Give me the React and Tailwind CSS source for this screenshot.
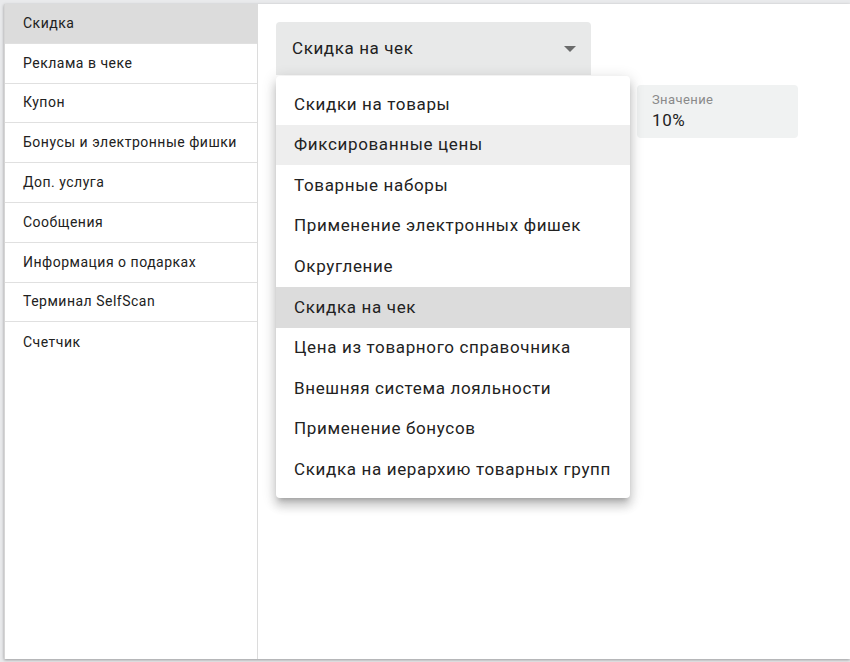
import React from "react";

const side = [
  "Скидка",
  "Реклама в чеке",
  "Купон",
  "Бонусы и электронные фишки",
  "Доп. услуга",
  "Сообщения",
  "Информация о подарках",
  "Терминал SelfScan",
  "Счетчик",
];

const menu = [
  "Скидки на товары",
  "Фиксированные цены",
  "Товарные наборы",
  "Применение электронных фишек",
  "Округление",
  "Скидка на чек",
  "Цена из товарного справочника",
  "Внешняя система лояльности",
  "Применение бонусов",
  "Скидка на иерархию товарных групп",
];

export default function App() {
  return (
    <div
      className="w-[850px] h-[662px] bg-[#e9eaec] pl-[4px] pt-[4px] overflow-hidden"
      style={{ fontFamily: "Roboto, 'Noto Sans', sans-serif" }}
    >
      <div className="h-[655px] bg-white flex shadow-[0_1px_3px_rgba(0,0,0,0.35)] border-l border-[#d5d5d5]">
        <div className="w-[253px] shrink-0 border-r border-[#dcdcdc] flex flex-col">
          {side.map((s, i) => (
            <div
              key={s}
              className={
                "h-[39.8px] flex items-center pl-[18px] text-[14px] tracking-[0.5px] text-[#212121] " +
                (i < side.length - 1 ? "border-b border-[#e0e0e0] " : "") +
                (i === 0 ? "bg-[#dcdcdc]" : "")
              }
            >
              {s}
            </div>
          ))}
        </div>
        <div className="relative flex-1 pl-[18px] pt-[18px]">
          <div className="flex items-start gap-[46px]">
            <div className="w-[315px] h-[53px] bg-[#e8e9e9] rounded-t-[4px] flex items-center justify-between pl-[16px] pr-[15px]">
              <span className="text-[17px] tracking-[0.6px] text-[#212121]">Скидка на чек</span>
              <svg width="12" height="6" viewBox="0 0 10 5">
                <path d="M0 0L5 5L10 0Z" fill="rgba(0,0,0,0.54)" />
              </svg>
            </div>
          </div>
          <div className="mt-[10px] ml-[361px] w-[161px] h-[53px] bg-[#f0f2f2] rounded-[4px] pl-[15px] pt-[8px]">
            <div className="text-[13px] tracking-[0.4px] text-[#8a8a8a] leading-[14px]">Значение</div>
            <div className="text-[17px] tracking-[0.6px] text-[#222] leading-[20px] mt-[3px]">10%</div>
          </div>
          <div className="absolute left-[18px] top-[72px] w-[354px] bg-white rounded-[4px] py-[8px] shadow-[0_5px_5px_-3px_rgba(0,0,0,0.2),0_8px_10px_1px_rgba(0,0,0,0.14),0_3px_14px_2px_rgba(0,0,0,0.12)]">
            {menu.map((m, i) => (
              <div
                key={m}
                className={
                  "h-[40.6px] flex items-center pl-[18px] text-[17px] tracking-[0.65px] text-[#222] whitespace-nowrap " +
                  (i === 1 ? "bg-[#eeeeee]" : i === 5 ? "bg-[#dcdcdc]" : "")
                }
              >
                {m}
              </div>
            ))}
          </div>
        </div>
      </div>
    </div>
  );
}
